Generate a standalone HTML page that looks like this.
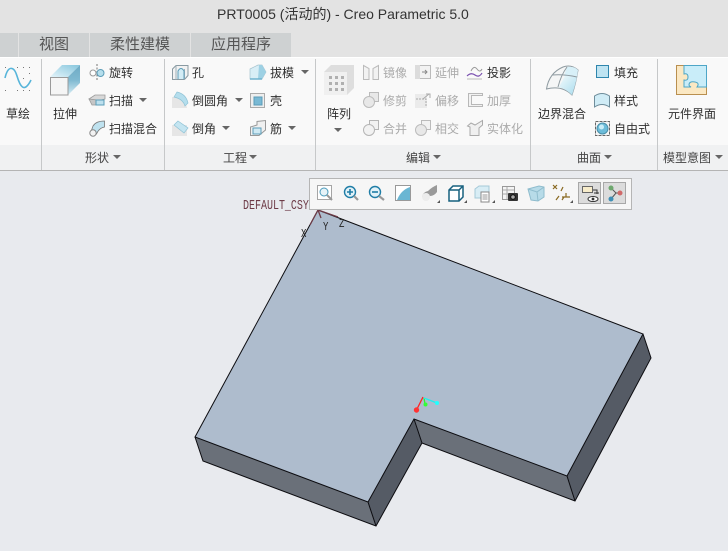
<!DOCTYPE html>
<html><head><meta charset="utf-8">
<style>
html,body{margin:0;padding:0}
body{width:728px;height:551px;overflow:hidden;position:relative;background:#e8eaee;font-family:"Liberation Sans","Noto Sans CJK SC",sans-serif;color:#333}
.a{position:absolute}
.t{position:absolute;font-size:12px;line-height:16px;white-space:nowrap;color:#2f2f2f}
.d{color:#ababab}
.tab{position:absolute;top:33px;height:24px;background:#ced1d2;font-size:15px;line-height:24px;text-align:center;color:#555}
.sep{position:absolute;top:59px;width:1px;height:111px;background:#c6c8c9}
.arr{position:absolute;width:0;height:0;border-left:4px solid transparent;border-right:4px solid transparent;border-top:4px solid #666}
.f{position:absolute;top:150px;font-size:12px;line-height:16px;white-space:nowrap;color:#444}
svg{position:absolute;overflow:visible}
</style></head><body>
<div class="a" style="left:0;top:0;width:728px;height:57px;background:#e3e3e3"></div>
<div class="a" style="left:0;top:57px;width:728px;height:88px;background:#f9f9f9;border-top:1px solid #fff"></div>
<div class="a" style="left:0;top:145px;width:728px;height:25px;background:#f0f1f2"></div>
<div class="a" style="left:0;top:170px;width:728px;height:1px;background:#b4b4b4"></div>
<div class="a" style="left:217px;top:5px;font-size:14px;line-height:18px;white-space:nowrap;color:#333">PRT0005 (活动的) - Creo Parametric 5.0</div>

<div class="tab" style="left:0;width:18px"></div>
<div class="tab" style="left:19px;width:70px">视图</div>
<div class="tab" style="left:90px;width:100px">柔性建模</div>
<div class="tab" style="left:191px;width:100px">应用程序</div>

<div class="sep" style="left:41px"></div>
<div class="sep" style="left:164px"></div>
<div class="sep" style="left:315px"></div>
<div class="sep" style="left:530px"></div>
<div class="sep" style="left:657px"></div>

<!-- sketch -->
<svg style="left:0;top:62px" width="36" height="32"><g fill="#777"><rect x="5" y="5" width="1" height="1"/><rect x="17" y="5" width="1" height="1"/><rect x="23" y="5" width="1" height="1"/><rect x="29" y="5" width="1" height="1"/><rect x="5" y="28" width="1" height="1"/><rect x="17" y="28" width="1" height="1"/><rect x="23" y="28" width="1" height="1"/><rect x="29" y="28" width="1" height="1"/><rect x="23" y="16" width="1" height="1"/><rect x="29" y="11" width="1" height="1"/></g><path d="M5 16C8 3 14 4 17 14S24 32 31 18" fill="none" stroke="#57b5da" stroke-width="1.600"/></svg>
<div class="t" style="left:6px;top:106px">草绘</div>

<!-- extrude -->
<svg style="left:50px;top:65px" width="31" height="31"><defs><linearGradient id="g1" x1="0" y1="1" x2="1" y2="0"><stop offset="0" stop-color="#e4f4fa"/><stop offset="1" stop-color="#86c6dd"/></linearGradient><linearGradient id="g2" x1="0" y1="1" x2="0" y2="0"><stop offset="0" stop-color="#d6edf5"/><stop offset=".5" stop-color="#7fb9d1"/><stop offset="1" stop-color="#6eaac4"/></linearGradient></defs><path d="M0 12L12 0H30L18 12Z" fill="url(#g1)"/><path d="M18 12L30 0V18L18 30Z" fill="url(#g2)"/><rect x=".5" y="12.500" width="17.500" height="17.500" fill="#f5f5f5" stroke="#9a9a9a"/></svg>
<div class="t" style="left:53px;top:106px">拉伸</div>
<svg style="left:89px;top:64px" width="16" height="17"><path d="M8 0V17" stroke="#777" stroke-dasharray="2 1.500"/><circle cx="4" cy="9" r="3" fill="#fff" stroke="#999"/><circle cx="11.500" cy="9" r="3.500" fill="#b5deec" stroke="#5c9db8"/></svg>
<div class="t" style="left:109px;top:65px">旋转</div>
<svg style="left:89px;top:94px" width="17" height="13"><path d="M0 5L6 1H16V5L12 6H2Z" fill="#d8d8d8" stroke="#9a9a9a" stroke-width=".8"/><path d="M0 5L3 11H8V6Z" fill="#c6c6c6" stroke="#999" stroke-width=".8"/><path d="M7 6H15V11H7Z" fill="#bde0ee" stroke="#5c9db8"/></svg>
<div class="t" style="left:109px;top:93px">扫描</div>
<div class="arr" style="left:139px;top:98px"></div>
<svg style="left:89px;top:120px" width="17" height="17"><path d="M1.500 13L4 6Q7 1 15.500 1V7Q10 8 7.500 14Z" fill="#bfe2ef" stroke="#777" stroke-width=".8"/><circle cx="4" cy="13" r="3.200" fill="#f2f2f2" stroke="#888"/></svg>
<div class="t" style="left:109px;top:121px">扫描混合</div>
<div class="f" style="left:85px">形状</div>
<div class="arr" style="left:113px;top:155px"></div>

<!-- engineering -->
<svg style="left:172px;top:65px" width="17" height="15"><path d="M.5 4L4 .5H16V10.500L12.500 14.500H.5Z" fill="#f2f2f2" stroke="#8a9aa2"/><path d="M4 .5V14.500M12.500 14.500V4" stroke="#9fb0b8" fill="none"/><path d="M6 14V6Q9 1 12 6V14" fill="#d3ecf5" stroke="#5c9db8"/></svg>
<div class="t" style="left:192px;top:65px">孔</div>
<svg style="left:172px;top:92px" width="17" height="16"><path d="M0 5H8Q14 8 15 16H0Z" fill="#e6e6e6"/><path d="M5 0Q14 2 16 11L13 14Q11 7 2 5Z" fill="#b5deed" stroke="#8fc3d6" stroke-width=".7"/></svg>
<div class="t" style="left:192px;top:93px">倒圆角</div>
<div class="arr" style="left:235px;top:98px"></div>
<svg style="left:172px;top:121px" width="17" height="15"><rect x="0" y="4" width="15" height="11" fill="#e6e6e6"/><path d="M6 0L16 7L12 12L2 4Z" fill="#c4e5f1" stroke="#8fc3d6" stroke-width=".7"/></svg>
<div class="t" style="left:192px;top:121px">倒角</div>
<div class="arr" style="left:222px;top:126px"></div>
<svg style="left:250px;top:64px" width="16" height="16"><path d="M0 5L8 1H12L16 8L12 15H0Z" fill="#d8eef6" stroke="#a5c3cf" stroke-width=".7"/><path d="M9 1L12 1L16 8L12 15H8Z" fill="#9ed1e4"/><path d="M0 15H12" stroke="#6fb3cf" stroke-width="1.500"/></svg>
<div class="t" style="left:270px;top:65px">拔模</div>
<div class="arr" style="left:301px;top:70px"></div>
<svg style="left:250px;top:93px" width="15" height="15"><rect x=".5" y=".5" width="14" height="14" fill="#eee" stroke="#aaa"/><rect x="4" y="4" width="8" height="8" fill="#79b9d4" stroke="#5a9cb8"/></svg>
<div class="t" style="left:270px;top:93px">壳</div>
<svg style="left:250px;top:120px" width="16" height="16"><path d="M.5 7L7 5V1.500L15.500 .5V10L9 15.500H.5Z" fill="#f0f0f0" stroke="#999"/><path d="M3 8H11V14H3Z" fill="#cfe9f3" stroke="#5c9db8"/></svg>
<div class="t" style="left:270px;top:121px">筋</div>
<div class="arr" style="left:288px;top:126px"></div>
<div class="f" style="left:223px">工程</div>
<div class="arr" style="left:249px;top:155px"></div>

<!-- edit -->
<svg style="left:324px;top:65px" width="30" height="30"><path d="M0 7L7 0H30V23L23 30H0Z" fill="#dedede"/><rect x="0" y="7" width="23" height="23" fill="#f0f0f0"/><g fill="#b0b0b0"><rect x="5" y="11" width="3" height="3"/><rect x="11" y="11" width="3" height="3"/><rect x="17" y="11" width="3" height="3"/><rect x="5" y="17" width="3" height="3"/><rect x="11" y="17" width="3" height="3"/><rect x="17" y="17" width="3" height="3"/><rect x="5" y="23" width="3" height="3"/><rect x="11" y="23" width="3" height="3"/><rect x="17" y="23" width="3" height="3"/></g></svg>
<div class="t" style="left:327px;top:106px">阵列</div>
<div class="arr" style="left:334px;top:128px"></div>
<svg style="left:363px;top:65px" width="16" height="15" fill="#f2f2f2" stroke="#bbb"><path d="M.5.5L6 3.500V14.500H.5Z"/><path d="M15.500 .5L10 3.500V14.500H15.500Z"/></svg>
<div class="t d" style="left:383px;top:65px">镜像</div>
<svg style="left:363px;top:92px" width="16" height="16" fill="#e8e8e8" stroke="#bbb"><rect x="6.500" y=".5" width="9" height="9"/><circle cx="6" cy="10" r="5.500"/></svg>
<div class="t d" style="left:383px;top:93px">修剪</div>
<svg style="left:363px;top:120px" width="16" height="16" fill="#f2f2f2" stroke="#b5b5b5"><rect x="6.500" y=".5" width="9" height="9"/><circle cx="6" cy="10" r="5.500"/></svg>
<div class="t d" style="left:383px;top:121px">合并</div>
<svg style="left:415px;top:65px" width="16" height="14"><rect x=".5" y=".5" width="15" height="13" fill="#f2f2f2" stroke="#bbb"/><rect x="0" y="0" width="5" height="14" fill="#dcdcdc"/><path d="M7 7H12M10 5L12 7L10 9" stroke="#888" fill="none"/></svg>
<div class="t d" style="left:435px;top:65px">延伸</div>
<svg style="left:415px;top:92px" width="16" height="16"><rect x="0" y="2" width="12" height="14" fill="#ebebeb"/><path d="M8 7L14 2M11 2H15V6" stroke="#aaa" fill="none"/><path d="M1 7H11V15" stroke="#aaa" stroke-dasharray="2 1" fill="none"/></svg>
<div class="t d" style="left:435px;top:93px">偏移</div>
<svg style="left:415px;top:120px" width="16" height="16" fill="#e8e8e8" stroke="#bbb"><rect x="6.500" y=".5" width="9" height="9" fill="#f2f2f2"/><circle cx="6" cy="10" r="5.500"/></svg>
<div class="t d" style="left:435px;top:121px">相交</div>
<svg style="left:467px;top:65px" width="16" height="15"><path d="M4 6Q7 0 10 4T15 4" fill="none" stroke="#999"/><path d="M0 11Q4 7 8 10T15 8" fill="none" stroke="#7a4fb0" stroke-width="1.200"/><path d="M0 14H15" stroke="#bbb"/></svg>
<div class="t" style="left:487px;top:65px">投影</div>
<svg style="left:468px;top:93px" width="15" height="14"><path d="M.5.5H14.500V2.500H3.500V11.500H14.500V13.500H.5Z" fill="#f2f2f2" stroke="#b8b8b8"/></svg>
<div class="t d" style="left:487px;top:93px">加厚</div>
<svg style="left:467px;top:120px" width="16" height="16"><path d="M.5 6L4 3L8 5L15.500 .5V5L12 8V15.500H3V7Z" fill="#f0f0f0" stroke="#aaa"/></svg>
<div class="t d" style="left:487px;top:121px">实体化</div>
<div class="f" style="left:406px">编辑</div>
<div class="arr" style="left:433px;top:155px"></div>

<!-- surface -->
<svg style="left:546px;top:65px" width="33" height="31"><defs><linearGradient id="g3" x1="0" y1="0" x2="1" y2="1"><stop offset="0" stop-color="#f2fafc"/><stop offset="1" stop-color="#a9dcee"/></linearGradient></defs><path d="M.5 24Q3 8 17 2Q25 -1 32 5Q30 18 26 30Q16 20 .5 24Z" fill="#f5f6f6" stroke="#8e9aa0"/><path d="M19 11L31 12Q29 21 26 30Q20 24 13 22Z" fill="url(#g3)"/><path d="M21 2Q28 1 32 5L31 12L18 11Z" fill="#d8f0f8"/><path d="M21 2Q15 10 12 22M6 10Q18 9 31 12" stroke="#8e9aa0" fill="none"/></svg>
<div class="t" style="left:538px;top:106px">边界混合</div>
<svg style="left:596px;top:65px" width="14" height="14"><rect x=".5" y=".5" width="12" height="12" fill="#bfe4f2" stroke="#2f86ad"/></svg>
<div class="t" style="left:614px;top:65px">填充</div>
<svg style="left:594px;top:92px" width="17" height="16"><path d="M.5 15V4Q8 -1 15.500 4V15Q8 10 .5 15Z" fill="#d0ecf6" stroke="#6f8d9b"/></svg>
<div class="t" style="left:614px;top:93px">样式</div>
<svg style="left:594px;top:120px" width="17" height="17"><rect x="1.500" y="1.500" width="14" height="14" fill="#f5f5f5" stroke="#666" stroke-dasharray="3 1"/><circle cx="8.500" cy="8.500" r="5.500" fill="#6dbcd9" stroke="#4a8fa8"/><circle cx="7.500" cy="7" r="2.500" fill="#c9edf7"/></svg>
<div class="t" style="left:614px;top:121px">自由式</div>
<div class="f" style="left:577px">曲面</div>
<div class="arr" style="left:604px;top:155px"></div>

<!-- model -->
<svg style="left:676px;top:65px" width="32" height="31"><rect x=".5" y=".5" width="30" height="29" fill="#fbe8c3" stroke="#b98f4f"/><path d="M8 .5H30.500V22H21Q24 18 19 17Q13 16 13 20Q13 21 15 22H8V15Q12 16 12 12Q12 8 8 9Z" fill="#c9edf9" stroke="#4ea6c7"/></svg>
<div class="t" style="left:668px;top:106px">元件界面</div>
<div class="f" style="left:663px">模型意图</div>
<div class="arr" style="left:715px;top:155px"></div>

<!-- model geometry -->
<svg style="left:0;top:0" width="728" height="551">
<path d="M195 437L203 461L376 526L422 443L575 501L651 358L643 334L567 476L414 419L368 502Z" fill="#6a7079"/>
<path d="M414 419L422 443L376 526L368 502Z" fill="#555b65"/>
<path d="M643 334L651 358L575 501L567 476Z" fill="#555b65"/>
<path d="M318 210L643 334L567 476L414 419L368 502L195 437Z" fill="#aebccd" stroke="#0c0c10" stroke-width="1"/>
<path d="M195 437L203 461L376 526L422 443L575 501L651 358L643 334M368 502L376 526M414 419L422 443M567 476L575 501" fill="none" stroke="#0c0c10" stroke-width="1"/>
<path d="M318 210L310 225M318 210L338 217M318 210L321 218" stroke="#6d3b47" stroke-width="1.300" fill="none"/>
<path d="M417 409L423 397" stroke="#f22" stroke-width="1.300"/><path d="M424 398L425 404" stroke="#3e3" stroke-width="1.300"/><path d="M424 398L437 403" stroke="#2ee" stroke-width="1.300"/>
<circle cx="416.500" cy="410" r="2.700" fill="#f33"/><circle cx="425.500" cy="404.500" r="2" fill="#3f3"/><circle cx="437" cy="403" r="2" fill="#2ff"/>
<text transform="translate(243 209) scale(1 1.350)" font-family="Liberation Mono" font-size="10" fill="#6d3b47">DEFAULT_CSYS</text>
<text transform="translate(323 230) scale(1 1.300)" font-family="Liberation Mono" font-size="9" fill="#222">Y</text>
<text transform="translate(339 227) scale(1 1.300)" font-family="Liberation Mono" font-size="9" fill="#222">Z</text>
<text transform="translate(301 237) scale(1 1.300)" font-family="Liberation Mono" font-size="9" fill="#222">X</text>
</svg>

<!-- view toolbar -->
<div class="a" style="left:309px;top:178px;width:321px;height:30px;background:#f6f6f6;border:1px solid #b5b5b5"></div>
<svg style="left:309px;top:178px" width="323" height="32">
<rect x="8.500" y="7.500" width="14" height="14" fill="#fff" stroke="#a5a5a5"/><circle cx="15" cy="14" r="4" fill="#e6f3f8" stroke="#4a9abb"/><path d="M18 17L23 22" stroke="#999" stroke-width="2"/>
<circle cx="41" cy="14" r="5.500" fill="#e3f2f8" stroke="#1f7da6" stroke-width="1.400"/><path d="M38 14H44M41 11V17" stroke="#1f7da6" stroke-width="1.600"/><path d="M45 18L49 22" stroke="#999" stroke-width="2.200"/>
<circle cx="66" cy="14" r="5.500" fill="#e3f2f8" stroke="#1f7da6" stroke-width="1.400"/><path d="M63 14H69" stroke="#1f7da6" stroke-width="1.600"/><path d="M70 18L75 22" stroke="#999" stroke-width="2.200"/>
<rect x="86.500" y="7.500" width="15" height="15" fill="#fff" stroke="#999"/><path d="M88 22L101 22V9Q92 12 88 22Z" fill="#6ab6d3"/>
<path d="M113 19Q114 14 119 13Q123 9 128 7L128 14Q125 18 121 18Z" fill="#9a9a9a"/><circle cx="117" cy="19" r="4" fill="#ececec"/><path d="M128 25H131V22Z" fill="#555"/>
<path d="M140 12L144 8H154V19L150 23H140Z" fill="#fff" stroke="#17607f" stroke-width="1.500"/><path d="M140 12H150V23M150 12L154 8" fill="none" stroke="#17607f" stroke-width="1.500"/><path d="M155 25H158V22Z" fill="#555"/>
<path d="M166 11L170 8H180V20H166Z" fill="#d8edf5" stroke="#a5c9d8"/><rect x="172" y="14" width="8" height="10" fill="#fff" stroke="#888"/><path d="M173.500 17H178.500M173.500 19H178.500M173.500 21H178.500" stroke="#777" stroke-width=".7"/><path d="M183 25H186V22Z" fill="#555"/>
<rect x="193.500" y="8.500" width="12" height="13" fill="#f4f4f4" stroke="#999"/><path d="M194 12H205M194 16H205M198 9V21" stroke="#aaa"/><rect x="199" y="15" width="10" height="8" rx="1" fill="#333"/><circle cx="204" cy="19" r="2.300" fill="#aaa" stroke="#111"/>
<path d="M219 11L230 8L235 9V19L229 23L222 22Z" fill="#b7dbe8" stroke="#8fbccd"/><path d="M219 11L228 14L235 9M228 14L229 23" stroke="#8fbccd" fill="none"/>
<path d="M244 7L248 11M248 7L244 11M254 9L252 13M247 22L250 18M257 15V19H253M257 19L261 19M255 19L253 22" stroke="#8a6a22" stroke-width="1.200" fill="none"/><path d="M261 25H264V22Z" fill="#555"/>
<rect x="269.500" y="4.500" width="22" height="21" fill="#dcdcdc" stroke="#a8a8a8"/><rect x="273.500" y="8.500" width="10" height="6" fill="#f7ecca" stroke="#666"/><path d="M284 12H288V16M285 15H290" stroke="#333" fill="none"/><ellipse cx="284" cy="21" rx="5" ry="2.500" fill="#fff" stroke="#333"/><circle cx="284" cy="21" r="1.400" fill="#333"/>
<rect x="294.500" y="4.500" width="22" height="21" fill="#dcdcdc" stroke="#a8a8a8"/><path d="M302 10L307 15L302 21M307 15H311" stroke="#555" fill="none"/><circle cx="302" cy="10" r="2.500" fill="#6ea86e"/><circle cx="302" cy="21" r="2.500" fill="#3f8fb5"/><circle cx="311" cy="15" r="2.500" fill="#d06a6a"/>
</svg>
</body></html>
